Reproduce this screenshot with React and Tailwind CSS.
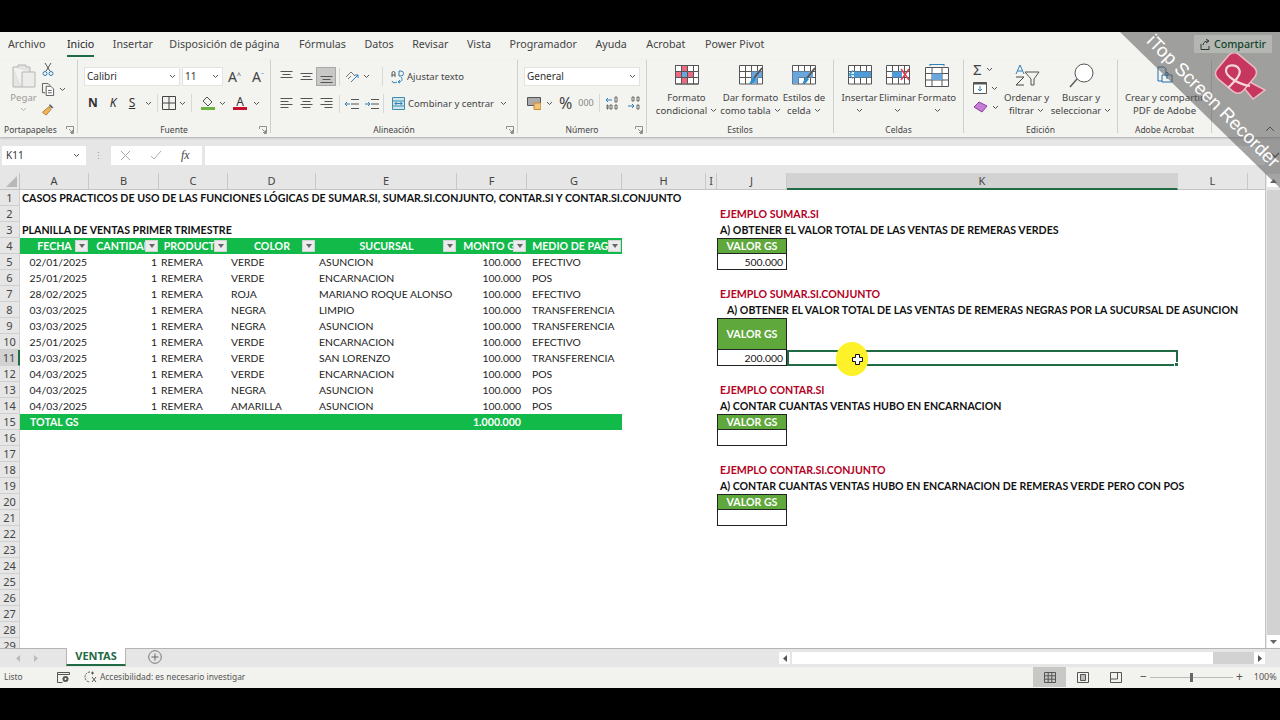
import React from "react";

const Ch = ({ className = "" }) => (
  <svg width="7" height="5" viewBox="0 0 7 5" className={"shrink-0 " + className}><path d="M1 1l2.5 2.5L6 1" fill="none" stroke="#555" strokeWidth="1" /></svg>
);
const Launcher = () => (
  <svg width="8" height="8" viewBox="0 0 8 8" className="absolute right-[3px] bottom-[-10px]"><path d="M.5 3V.5H7.500V7.500H5M3 3l3.500 3.500M6.500 4v2.500H4" fill="none" stroke="#777" strokeWidth=".8" /></svg>
);
const Group = ({ w, label, children }) => (
  <div className={"relative shrink-0 flex flex-col h-[73px] border-r border-[#cfcfcc] " + w}>
    <div className="h-[64px] shrink-0 relative">{children}</div>
    <div className="shrink-0 h-[12px] text-center text-[8.5px] leading-[12px] text-[#444] font-['Noto_Sans',sans-serif] truncate">{label}</div>
  </div>
);
const Lines = ({ kind }) => {
  const rows = {
    top: [[0, 12, 1], [2, 10, 4], [0, 12, 7]],
    mid: [[0, 12, 3], [2, 10, 6], [0, 12, 9]],
    bot: [[0, 12, 6], [2, 10, 9], [0, 12, 12]],
    left: [[0, 12, 1], [0, 8, 4], [0, 12, 7], [0, 8, 10]],
    center: [[0, 12, 1], [2, 10, 4], [0, 12, 7], [2, 10, 10]],
    right: [[0, 12, 1], [4, 12, 4], [0, 12, 7], [4, 12, 10]],
  }[kind];
  return (
    <svg width="13" height="13" viewBox="0 0 12 13">
      {rows.map((r, i) => <path key={i} d={`M${r[0]} ${r[2] + 0.5}H${r[1]}`} stroke="#555" strokeWidth="1" />)}
    </svg>
  );
};
const TableIcon = ({ children, w = 24, h = 20 }) => (
  <svg width={w} height={h} viewBox="0 0 24 20" className="block">{children}</svg>
);
const grid = "M.5 .5H23.500V19H.5ZM.5 6.500H23.500M.5 12.500H23.500M6.500 .5V19M12.500 .5V19M18.500 .5V19";

const BigBtn = ({ icon, l1, l2, chev1, chev2, className = "" }) => (
  <div className={"flex flex-col items-center text-[9.6px] leading-[13px] text-[#444] font-['Noto_Sans',sans-serif] " + className}>
    <div className="h-[20px] mt-[5px] flex items-center justify-center">{icon}</div>
    <div className="mt-[6px] whitespace-nowrap flex items-center gap-[3px] h-[13px]">{l1}{chev1 && <Ch />}</div>
    <div className="whitespace-nowrap flex items-center gap-[3px] h-[13px]">{l2}{chev2 && <Ch />}</div>
  </div>
);

const Ribbon = () => (
  <div className="flex h-[77px] bg-[#f3f3f0] shadow-[0_1px_2px_rgba(0,0,0,.25)] relative">
    <Group w="w-[78px]" label={<span className="block text-left pl-[4px]">Portapapeles</span>}>
      <Launcher />
      <div className="flex pl-[11px] pt-[3px]">
        <div className="flex flex-col items-center w-[25px]">
          <svg width="24" height="27" viewBox="0 0 24 27"><path d="M1 4h5V2h8v2h4v5M1 4v20h9" fill="#e4e4e2" stroke="#b5b5b3" /><path d="M10 9h13v15H10z" fill="#ececea" stroke="#b5b5b3" /></svg>
          <div className="text-[9.6px] leading-[13px] text-[#9a9a98] font-['Noto_Sans',sans-serif] mt-[1px]">Pegar</div>
          <Ch className="mt-[3px] opacity-40" />
        </div>
        <div className="flex flex-col ml-[5px] gap-[7px]">
          <svg width="14" height="13" viewBox="0 0 14 13"><path d="M4 0l5 8M10 0L5 8" stroke="#555" fill="none" /><circle cx="4" cy="10.500" r="2" fill="none" stroke="#2f7fb8" /><circle cx="10" cy="10.500" r="2" fill="none" stroke="#2f7fb8" /></svg>
          <div className="flex items-center gap-[3px]">
            <svg width="15" height="13" viewBox="0 0 15 14"><path d="M1 .5h6l2 2V3M1 .5v10h3" fill="none" stroke="#555" /><path d="M5 3.500h5l3 3v7H5zM7 8h4M7 10.500h4" fill="#fff" stroke="#555" /></svg>
            <Ch />
          </div>
          <svg width="15" height="13" viewBox="0 0 15 14"><path d="M9 1l4 4-2 1-3-3z" fill="#666" /><path d="M8 4l2 3-5 6-4-3z" fill="#f0b35a" stroke="#b8792a" /></svg>
        </div>
      </div>
    </Group>
    <Group w="w-[193px]" label="Fuente">
      <Launcher />
      <div className="flex items-center pl-[6px] pt-[7px] gap-[2px]">
        <div className="w-[96px] h-[19px] bg-white border border-[#e3e3e0] flex items-center justify-between pl-[2px] pr-[3px] text-[10px] text-[#333] font-['Noto_Sans',sans-serif]">Calibri<Ch /></div>
        <div className="w-[41px] h-[19px] bg-white border border-[#e3e3e0] flex items-center justify-between pl-[2px] pr-[3px] text-[10px] text-[#333] font-['Noto_Sans',sans-serif]">11<Ch /></div>
        <span className="ml-[3px] text-[14px] leading-none text-[#444] font-['Noto_Sans',sans-serif] w-[22px]">A<sup className="text-[7px]">^</sup></span>
        <span className="text-[14px] leading-none text-[#444] font-['Noto_Sans',sans-serif]">A<sup className="text-[7px] text-[#2f7fb8]">ˇ</sup></span>
      </div>
      <div className="flex items-center pl-[5px] mt-[8px] h-[18px] text-[#333]">
        <span className="w-[20px] text-[12px] font-bold font-['Noto_Sans',sans-serif] text-center">N</span>
        <span className="w-[20px] text-[12px] italic font-['Noto_Sans',sans-serif] text-center">K</span>
        <span className="w-[18px] text-[12px] underline font-['Noto_Sans',sans-serif] text-center">S</span>
        <Ch className="ml-[4px]" />
        <div className="w-px h-[18px] bg-[#d8d8d5] ml-[5px]" />
        <svg width="14" height="14" viewBox="0 0 14 14" className="ml-[4px]"><path d="M.5 .5h13v13H.5zM7 .5v13M.5 7h13" fill="none" stroke="#444" /></svg>
        <Ch className="ml-[3px]" />
        <div className="w-px h-[18px] bg-[#d8d8d5] ml-[5px]" />
        <div className="flex flex-col items-center ml-[9px] w-[14px]">
          <svg width="12" height="11" viewBox="0 0 12 11"><path d="M5 1l5 5-4 4-5-5z" fill="none" stroke="#555" /></svg>
          <div className="w-[14px] h-[3px] bg-[#6db33f]" />
        </div>
        <Ch className="ml-[4px]" />
        <div className="flex flex-col items-center ml-[7px] w-[14px]">
          <span className="text-[12px] leading-[11px] text-[#333] font-['Noto_Sans',sans-serif]">A</span>
          <div className="w-[14px] h-[3px] bg-[#c8102e]" />
        </div>
        <Ch className="ml-[6px]" />
      </div>
    </Group>
    <Group w="w-[247px]" label="Alineación">
      <Launcher />
      <div className="flex items-center pl-[9px] pt-[7px] h-[26px]">
        <div className="w-[20px]"><Lines kind="top" /></div>
        <div className="w-[16px]"><Lines kind="mid" /></div>
        <div className="w-[20px] h-[19px] bg-[#c8c8c6] border border-[#a8a8a6] flex items-center justify-center"><Lines kind="bot" /></div>
        <div className="w-px h-[18px] bg-[#d8d8d5] ml-[3px]" />
        <svg width="15" height="14" viewBox="0 0 15 14" className="ml-[5px]"><path d="M1 7l5-5 4 4M3 9l3-3" fill="none" stroke="#777" /><path d="M6 12L13 5M13 5h-3M13 5v3" fill="none" stroke="#2f7fb8" /></svg>
        <Ch className="ml-[3px]" />
        <div className="w-px h-[19px] bg-[#d8d8d5] ml-[12px]" />
        <svg width="13" height="14" viewBox="0 0 13 14" className="ml-[8px]"><path d="M1 7V3a1.500 1.500 0 013 0v4M1 5h3" fill="none" stroke="#555" /><path d="M8 1v5h2a1 1 0 000-5zM1 11c0 2 4 2 5 1M10 7c2 2 1 5-3 5l2-2M7 12l2 1" fill="none" stroke="#2f7fb8" /></svg>
        <span className="ml-[3px] mt-[1px] text-[9.5px] text-[#444] font-['Noto_Sans',sans-serif]">Ajustar texto</span>
      </div>
      <div className="flex items-center pl-[9px] mt-[8px] h-[19px]">
        <div className="w-[20px]"><Lines kind="left" /></div>
        <div className="w-[20px]"><Lines kind="center" /></div>
        <div className="w-[19px]"><Lines kind="right" /></div>
        <div className="w-px h-[18px] bg-[#d8d8d5]" />
        <svg width="14" height="12" viewBox="0 0 14 12" className="ml-[5px]"><path d="M6 1.500h8M6 6h8M6 10.500h8" stroke="#555" /><path d="M0 6h5M0 6l2-2M0 6l2 2" fill="none" stroke="#2f7fb8" /></svg>
        <svg width="14" height="12" viewBox="0 0 14 12" className="ml-[6px]"><path d="M6 1.500h8M6 6h8M6 10.500h8" stroke="#555" /><path d="M0 6h5M5 6L3 4M5 6L3 8" fill="none" stroke="#2f7fb8" /></svg>
        <div className="w-px h-[19px] bg-[#d8d8d5] ml-[4px]" />
        <svg width="13" height="13" viewBox="0 0 13 13" className="ml-[8px]"><path d="M.5 .5h12v12H.5zM.5 4h12M.5 9h12" fill="#cfe6ee" stroke="#3f8fa8" /><path d="M3 6.500h7M3 6.500l1.500-1.500M3 6.500L4.500 8M10 6.500L8.500 5M10 6.500L8.500 8" fill="none" stroke="#2f7fb8" /></svg>
        <span className="ml-[3px] mt-[1px] text-[9.5px] text-[#444] font-['Noto_Sans',sans-serif] whitespace-nowrap">Combinar y centrar</span>
        <Ch className="ml-[6px]" />
      </div>
    </Group>
    <Group w="w-[129px]" label="Número">
      <Launcher />
      <div className="pl-[6px] pt-[7px]">
        <div className="w-[116px] h-[19px] bg-white border border-[#e3e3e0] flex items-center justify-between pl-[2px] pr-[3px] text-[10px] text-[#333] font-['Noto_Sans',sans-serif]">General<Ch /></div>
      </div>
      <div className="flex items-center pl-[9px] mt-[8px] h-[18px] text-[#444] font-['Noto_Sans',sans-serif]">
        <svg width="14" height="13" viewBox="0 0 14 13"><path d="M.5 .5h13v8H.5z" fill="#aaa" stroke="#555" /><path d="M7 6h7v6.500H7z" fill="#f2c27a" stroke="#c88a2c" /></svg>
        <Ch className="ml-[5px]" />
        <span className="ml-[6px] text-[16px] leading-none">%</span>
        <span className="ml-[6px] text-[9px] text-[#888]">000</span>
        <div className="w-px h-[18px] bg-[#d8d8d5] ml-[5px]" />
        <svg width="14" height="14" viewBox="0 0 14 14" className="ml-[6px]"><path d="M0 4h6M0 4l2-2M0 4l2 2" fill="none" stroke="#2f7fb8" /><path d="M9 1h2v5H9zM1 9h1v4H1zM4 9h2v4H4zM9 9h2v4H9z" fill="none" stroke="#444" strokeWidth=".8" /></svg>
        <svg width="14" height="14" viewBox="0 0 14 14" className="ml-[8px]"><path d="M0 10h6M6 10L4 8M6 10l-2 2" fill="none" stroke="#2f7fb8" /><path d="M4 1h2v4H4zM9 1h2v4H9zM9 9h2v4H9z" fill="none" stroke="#444" strokeWidth=".8" /></svg>
      </div>
    </Group>
    <Group w="w-[187px]" label="Estilos">
      <div className="flex pl-[8px]">
        <BigBtn className="w-[63px]" l1="Formato" l2="condicional" chev2 icon={<TableIcon><path d={grid} fill="#fff" stroke="#555" /><path d="M6.500 .5h6v6h6v6h-6v6h-6v-6h-6v-6h6z" fill="#ef6a80" /><path d="M6.500 6.500h6v6h-6z" fill="#6aa6de" /><path d={grid} fill="none" stroke="#555" /></TableIcon>} />
        <BigBtn className="w-[65px] mr-[-6px]" l1="Dar formato" l2="como tabla" chev2 icon={<TableIcon><path d={grid} fill="#fff" stroke="#555" /><path d="M12.500 6.500H23v6H18.500v6H12.500z" fill="#6aa6de" /><path d="M23 3L15 13" stroke="#555" strokeWidth="2" /><path d="M14 12l3 2-3 4-4 1z" fill="#2f8fc8" /></TableIcon>} />
        <BigBtn className="w-[54px]" l1="Estilos de" l2="celda" chev2 icon={<TableIcon><path d={grid} fill="#fff" stroke="#555" /><path d="M.5 6.500H21v6H6.500v6H.5z" fill="#6aa6de" /><path d="M23 3L15 13" stroke="#555" strokeWidth="2" /><path d="M14 12l3 2-3 4-4 1z" fill="#2f8fc8" /></TableIcon>} />
      </div>
    </Group>
    <Group w="w-[130px]" label="Celdas">
      <div className="flex pl-[7px]">
        <BigBtn className="w-[37px]" l1="Insertar" l2={<Ch />} icon={<TableIcon><path d={grid} fill="#fff" stroke="#555" /><path d="M6 6.500H23v6H6z" fill="#4f9cd8" /><path d="M1 9.500h9M1 9.500l4-4M1 9.500l4 4" fill="none" stroke="#3f9fd0" strokeWidth="1.500" /></TableIcon>} />
        <BigBtn className="w-[39px]" l1="Eliminar" l2={<Ch />} icon={<TableIcon><path d={grid} fill="#fff" stroke="#555" /><path d="M6 6.500H16v6H6z" fill="#4f9cd8" /><path d="M15 4l8 11M23 4l-8 11" stroke="#d8405a" strokeWidth="1.500" /></TableIcon>} />
        <BigBtn className="w-[40px]" l1="Formato" l2={<Ch />} icon={<svg width="24" height="23" viewBox="0 0 24 23"><path d="M5 .5h14M5 0v2M19 0v2" stroke="#2f7fb8" /><path d="M.5 3.500h23v19H.5zM.5 9.500h23M.5 16h23M7 3.500v19M17 3.500v19" fill="#fff" stroke="#555" /><path d="M7 9.500h10V16H7z" fill="#6aa6de" /></svg>} />
      </div>
    </Group>
    <Group w="w-[154px]" label="Edición">
      <div className="flex">
        <div className="flex flex-col pl-[9px] pt-[2px] gap-[5px] w-[40px]">
          <div className="flex items-center gap-[4px] h-[14px]"><span className="text-[15px] leading-none text-[#444] font-['Noto_Sans',sans-serif]">Σ</span><Ch /></div>
          <div className="flex items-center gap-[4px] h-[14px]"><svg width="14" height="12" viewBox="0 0 14 12"><path d="M.5 .5h13v11H.5z" fill="#fff" stroke="#555" /><path d="M.5 .5h13v2H.5z" fill="#555" /><path d="M7 4v5M5 7l2 2 2-2" fill="none" stroke="#2f7fb8" /></svg><Ch /></div>
          <div className="flex items-center gap-[4px] h-[14px]"><svg width="15" height="12" viewBox="0 0 15 12"><path d="M1 6l5-5 8 4-5 6z" fill="#c77dd8" stroke="#8a3fa0" /></svg><Ch /></div>
        </div>
        <BigBtn className="w-[45px]" l1="Ordenar y" l2="filtrar" chev2 icon={<svg width="26" height="23" viewBox="0 0 26 23"><path d="M2 10L6 1l4 9M3.500 7h5" fill="none" stroke="#2f7fb8" /><path d="M2 13h8L2 21h8" fill="none" stroke="#444" /><path d="M11 8h14l-5 7v6h-3v-6z" fill="none" stroke="#555" /></svg>} />
        <BigBtn className="w-[64px]" l1="Buscar y" l2="seleccionar" chev2 icon={<svg width="25" height="25" viewBox="0 0 25 25"><circle cx="15" cy="10" r="9" fill="#fff" stroke="#555" /><path d="M8 16L1 24" stroke="#555" strokeWidth="1.300" /></svg>} />
      </div>
    </Group>
    <Group w="w-[94px]" label="Adobe Acrobat">
      <BigBtn l1="Crear y compartir" l2="PDF de Adobe" icon={<svg width="16" height="18" viewBox="0 0 16 18"><path d="M1 1h6l2 2v4M1 1v14h4" fill="none" stroke="#1f6fae" /><path d="M5 9h10v7H5zM10 13V6M8 8l2-2 2 2" fill="none" stroke="#1f6fae" /></svg>} />
    </Group>
    <div className="flex-1 relative">
      <svg width="10" height="6" viewBox="0 0 10 6" className="absolute right-[5px] bottom-[5px]"><path d="M1 5l4-4 4 4" fill="none" stroke="#444" /></svg>
    </div>
  </div>
);

const FormulaBar = () => (
  <div className="h-[36px] bg-[#e6e6e6] flex items-center pl-[2px] font-['Noto_Sans',sans-serif]">
    <div className="w-[84px] h-[19px] bg-white flex items-center justify-between pl-[4px] pr-[6px] text-[10px] text-[#333]">K11<Ch /></div>
    <div className="w-[25px] text-center text-[#999] text-[9px] leading-none">⋮</div>
    <div className="w-[91px] h-[19px] bg-white flex items-center pl-[9px] gap-[19px]">
      <svg width="11" height="11" viewBox="0 0 11 11"><path d="M1 1l9 9M10 1l-9 9" stroke="#aaa" /></svg>
      <svg width="12" height="10" viewBox="0 0 12 10"><path d="M1 6l3 3 7-8" fill="none" stroke="#aaa" /></svg>
      <span className="text-[12px] italic text-[#444] font-['Liberation_Serif',serif] leading-none">fx</span>
    </div>
    <div className="ml-[3px] w-[1060px] h-[19px] bg-white" />
    <svg width="10" height="6" viewBox="0 0 10 6" className="ml-[5px]"><path d="M1 1l4 4 4-4" fill="none" stroke="#444" strokeWidth="1.300" /></svg>
  </div>
);

const gridCols = "grid-cols-[20px_69px_70px_69px_88px_141px_70px_95px_84px_11px_70px_391px_70px_17px]";
const colNames = ["A", "B", "C", "D", "E", "F", "G", "H", "I", "J", "K", "L"];

const sales = [
  ["02/01/2025", "VERDE", "ASUNCION", "EFECTIVO"],
  ["25/01/2025", "VERDE", "ENCARNACION", "POS"],
  ["28/02/2025", "ROJA", "MARIANO ROQUE ALONSO", "EFECTIVO"],
  ["03/03/2025", "NEGRA", "LIMPIO", "TRANSFERENCIA"],
  ["03/03/2025", "NEGRA", "ASUNCION", "TRANSFERENCIA"],
  ["25/01/2025", "VERDE", "ENCARNACION", "EFECTIVO"],
  ["03/03/2025", "VERDE", "SAN LORENZO", "TRANSFERENCIA"],
  ["04/03/2025", "VERDE", "ENCARNACION", "POS"],
  ["04/03/2025", "NEGRA", "ASUNCION", "POS"],
  ["04/03/2025", "AMARILLA", "ASUNCION", "POS"],
];

const C = ({ className = "", children }) => (
  <div className={"whitespace-nowrap leading-[16px] h-full " + className}>{children}</div>
);
const Filter = () => (
  <div className="absolute right-[1px] top-[2px] w-[13px] h-[12px] bg-[#ececec] border border-[#d4d4d4] flex items-center justify-center">
    <svg width="6" height="4" viewBox="0 0 6 4"><path d="M0 0h6L3 4z" fill="#666" /></svg>
  </div>
);
const H = ({ children }) => (
  <div className="relative bg-[#12ba49] text-white font-bold text-center overflow-hidden whitespace-nowrap leading-[16px]">
    {children}<Filter />
  </div>
);
const Empty = () => <div />;
const Red = ({ children, className = "" }) => <C className={"font-bold text-[#b4001e] pl-[3px] " + className}>{children}</C>;
const Bk = ({ children, className = "" }) => <C className={"font-bold text-[#111] pl-[3px] " + className}>{children}</C>;
const VH = ({ className = "" }) => <div className={"bg-[#5fa83c] text-white font-bold text-center border border-[#222] pt-[1px] flex items-center justify-center " + className}>VALOR GS</div>;
const VB = ({ children }) => <div className="bg-white border border-[#222] border-t-0 text-right pr-[3px] leading-[16px] text-[10.4px] text-[#111]">{children}</div>;

const blanks = (n) => Array.from({ length: n }, (_, i) => <Empty key={"b" + i} />);

const rightPart = {
  2: <><Red>EJEMPLO SUMAR.SI</Red>{blanks(2)}</>,
  3: <><Bk>A) OBTENER EL VALOR TOTAL DE LAS VENTAS DE REMERAS VERDES</Bk>{blanks(2)}</>,
  4: <><VH />{blanks(2)}</>,
  5: <><VB>500.000</VB>{blanks(2)}</>,
  7: <><Red>EJEMPLO SUMAR.SI.CONJUNTO</Red>{blanks(2)}</>,
  8: <><Bk className="pl-[10px]">A) OBTENER EL VALOR TOTAL DE LAS VENTAS DE REMERAS NEGRAS POR LA SUCURSAL DE ASUNCION</Bk>{blanks(2)}</>,
  9: <><VH className="row-span-2" />{blanks(2)}</>,
  10: <>{blanks(2)}</>,
  11: <><VB>200.000</VB><div className="border-2 border-[#1f6b45] relative"><div className="absolute -right-[3px] -bottom-[3px] w-[5px] h-[5px] bg-[#1f6b45] border border-white" /></div><Empty /></>,
  13: <><Red>EJEMPLO CONTAR.SI</Red>{blanks(2)}</>,
  14: <><Bk>A) CONTAR CUANTAS VENTAS HUBO EN ENCARNACION</Bk>{blanks(2)}</>,
  15: <><VH />{blanks(2)}</>,
  16: <><VB />{blanks(2)}</>,
  18: <><Red>EJEMPLO CONTAR.SI.CONJUNTO</Red>{blanks(2)}</>,
  19: <><Bk className="text-[10.55px]">A) CONTAR CUANTAS VENTAS HUBO EN ENCARNACION DE REMERAS VERDE PERO CON POS</Bk>{blanks(2)}</>,
  20: <><VH />{blanks(2)}</>,
  21: <><VB />{blanks(2)}</>,
};

const Body = "text-[10.4px] text-[#222] ";
const leftPart = (r) => {
  if (r === 1) return <><C className="font-bold text-[#111] pl-[2px] text-[10.65px]">CASOS PRACTICOS DE USO DE LAS FUNCIONES LÓGICAS DE SUMAR.SI, SUMAR.SI.CONJUNTO, CONTAR.SI Y CONTAR.SI.CONJUNTO</C>{blanks(7)}</>;
  if (r === 3) return <><C className="font-bold text-[#111] pl-[2px]">PLANILLA DE VENTAS PRIMER TRIMESTRE</C>{blanks(7)}</>;
  if (r === 4) return <><H>FECHA</H><H>CANTIDAD</H><H>PRODUCTO</H><H>COLOR</H><H>SUCURSAL</H><H>MONTO GS</H><H>MEDIO DE PAGO</H><Empty /></>;
  if (r >= 5 && r <= 14) {
    const s = sales[r - 5];
    return <>
      <C className={Body + "text-right pr-[2px]"}>{s[0]}</C>
      <C className={Body + "text-right pr-[2px]"}>1</C>
      <C className={Body + "pl-[2px]"}>REMERA</C>
      <C className={Body + "pl-[3px]"}>{s[1]}</C>
      <C className={Body + "pl-[3px]"}>{s[2]}</C>
      <C className={Body + "text-right pr-[6px]"}>100.000</C>
      <C className={Body + "pl-[5px]"}>{s[3]}</C>
      <Empty />
    </>;
  }
  if (r === 15) return <>
    <C className="bg-[#12ba49] text-white font-bold pl-[10px]">TOTAL GS</C>
    <div className="bg-[#12ba49]" /><div className="bg-[#12ba49]" /><div className="bg-[#12ba49]" /><div className="bg-[#12ba49]" />
    <C className="bg-[#12ba49] text-white font-bold text-right pr-[6px]">1.000.000</C>
    <div className="bg-[#12ba49]" /><Empty />
  </>;
  return blanks(8);
};

const Sheet = () => (
  <div className={"grid flex-1 overflow-hidden bg-white text-[10.6px] font-['Lato',sans-serif] auto-rows-[16px] grid-rows-[17px] " + gridCols}>
    <div className="bg-[#e6e6e6] border-r border-b border-[#c4c4c4] relative">
      <div className="absolute right-[2px] bottom-[2px] w-0 h-0 border-l-[11px] border-l-transparent border-b-[11px] border-b-[#b8b8b8]" />
    </div>
    {colNames.map((n) => (
      <div key={n} className={"text-center text-[11px] leading-[16px] text-[#444] border-r font-['Noto_Sans',sans-serif] " + (n === "K" ? "bg-[#d2d2d2] border-[#d2d2d2] border-b-2 border-b-[#1f6b45]" : "bg-[#e6e6e6] border-[#c8c8c8] border-b border-b-[#c4c4c4]")}>{n}</div>
    ))}
    <div className="bg-[#e6e6e6] border-b border-[#c4c4c4]" />
    {Array.from({ length: 29 }, (_, i) => i + 1).map((r) => (
      <React.Fragment key={r}>
        <div className={"text-center text-[11px] leading-[16px] text-[#444] border-r border-b font-['Noto_Sans',sans-serif] " + (r === 11 ? "bg-[#d2d2d2] border-r-2 border-r-[#1f6b45] border-b-[#d2d2d2]" : "bg-[#e6e6e6] border-[#cfcfcf]")}>{r}</div>
        {leftPart(r)}
        <Empty />
        {rightPart[r] || blanks(3)}
        <div className="bg-white" />
      </React.Fragment>
    ))}
  </div>
);

const VScroll = () => (
  <div className="w-[15px] bg-[#e6e6e6] flex flex-col pt-[1px] pl-[1px] border-l border-[#c4c4c4]">
    <div className="h-[13px] bg-white flex items-center justify-center"><svg width="7" height="4" viewBox="0 0 7 4"><path d="M3.500 0L7 4H0z" fill="#666" /></svg></div>
    <div className="h-[3px]" />
    <div className="flex-1 bg-[#d2d2d2]" />
    <div className="h-[13px] bg-white flex items-center justify-center"><svg width="7" height="4" viewBox="0 0 7 4"><path d="M3.500 4L7 0H0z" fill="#666" /></svg></div>
  </div>
);

const TabBar = () => (
  <div className="h-[19px] bg-[#e6e6e6] border-t border-[#b4b4b4] flex font-['Noto_Sans',sans-serif]">
    <div className="w-[66px] flex items-center pl-[16px] gap-[14px]">
      <svg width="4" height="7" viewBox="0 0 4 7"><path d="M4 0L0 3.500 4 7z" fill="#bbb" /></svg>
      <svg width="4" height="7" viewBox="0 0 4 7"><path d="M0 0l4 3.500L0 7z" fill="#bbb" /></svg>
    </div>
    <div className="w-[60px] -mt-px h-[18px] bg-white border-l border-r border-b-2 border-b-[#1f6b45] border-[#b4b4b4] text-center text-[11px] font-bold leading-[15px] text-[#1f6b45]">VENTAS</div>
    <svg width="14" height="14" viewBox="0 0 14 14" className="ml-[22px] mt-[1px]"><circle cx="7" cy="7" r="6.300" fill="none" stroke="#777" /><path d="M3.500 7h7M7 3.500v7" stroke="#666" /></svg>
    <div className="ml-[617px] mt-[3px] flex h-[12px]">
      <div className="w-[11px] bg-white flex items-center justify-center"><svg width="4" height="7" viewBox="0 0 4 7"><path d="M4 0L0 3.500 4 7z" fill="#555" /></svg></div>
      <div className="w-[2px]" />
      <div className="w-[421px] bg-white" />
      <div className="w-[41px] bg-[#d2d2d2]" />
      <div className="w-[11px] bg-white flex items-center justify-center"><svg width="4" height="7" viewBox="0 0 4 7"><path d="M0 0l4 3.500L0 7z" fill="#555" /></svg></div>
    </div>
  </div>
);

const StatusBar = () => (
  <div className="h-[21px] pb-[1px] bg-[#f2f2ee] flex items-center text-[8.4px] text-[#555] font-['Noto_Sans',sans-serif] pl-[4px]">
    <span className="w-[53px]">Listo</span>
    <svg width="13" height="11" viewBox="0 0 13 11" className="mr-[14px]"><path d="M.5 .5h12v2H.5zM.5 2.500v8h5" fill="none" stroke="#555" /><circle cx="8.500" cy="7" r="3" fill="#555" /><circle cx="8.500" cy="7" r="1" fill="#fff" /></svg>
    <svg width="13" height="12" viewBox="0 0 13 12" className="mr-[2px]"><path d="M6 1a5 5 0 100 10" fill="none" stroke="#555" strokeDasharray="2 1" /><path d="M8 6l4 5M12 6l-4 5M7 2h3M8.500 .5v3" stroke="#555" /></svg>
    <span className="ml-[1px] w-[146px] whitespace-nowrap">Accesibilidad: es necesario investigar</span>
    <div className="flex items-center ml-[787px] h-full">
      <div className="w-[33px] h-full bg-[#c8c8c6] flex items-center justify-center"><svg width="12" height="11" viewBox="0 0 12 11"><path d="M.5 .5h11v10H.5zM.5 3.800h11M.5 7.200h11M4.200 .5v10M7.800 .5v10" fill="none" stroke="#555" /></svg></div>
      <div className="w-[33px] flex justify-center"><svg width="12" height="11" viewBox="0 0 12 11"><path d="M.5 .5h11v10H.5z" fill="none" stroke="#555" /><path d="M3.500 2.500h5v6h-5z" fill="#bbb" stroke="#555" /></svg></div>
      <div className="w-[33px] flex justify-center"><svg width="12" height="11" viewBox="0 0 12 11"><path d="M.5 .5h11v10H.5zM.5 7h7V.5" fill="none" stroke="#555" /></svg></div>
      <span className="ml-[8px] text-[12px] leading-none">−</span>
      <div className="relative w-[83px] h-px bg-[#bbb] ml-[3px]"><div className="absolute left-[40px] -top-[4px] w-[3px] h-[9px] bg-[#666]" /></div>
      <span className="ml-[3px] text-[12px] leading-none">+</span>
      <span className="ml-[11px] text-[9px] whitespace-nowrap">100%</span>
    </div>
  </div>
);

const tabs = [
  ["Archivo", "mr-[3px]"], ["Inicio", "text-[#222]"], ["Insertar", "mr-[-2px]"], ["Disposición de página", "mr-[1px]"],
  ["Fórmulas", ""], ["Datos", ""], ["Revisar", ""], ["Vista", ""], ["Programador", ""], ["Ayuda", "mr-[1px]"], ["Acrobat", "mr-[1px]"], ["Power Pivot", ""],
];

export default function App() {
  return (
    <div className="relative w-[1280px] h-[720px] bg-black overflow-hidden">
      <div className="h-[32px]" />
      <div className="h-[656px] flex flex-col bg-[#f3f3f0]">
        <div className="h-[28px] pb-[4px] flex items-center pl-[8px] gap-[18.5px] text-[10.7px] text-[#444] font-['Noto_Sans',sans-serif] bg-[#f3f3f0] relative">
          {tabs.map(([t, c]) => (
            <div key={t} className={"relative whitespace-nowrap " + c}>
              {t}
              {t === "Inicio" && <div className="absolute left-0 right-0 -bottom-[5px] h-[2px] bg-[#1f6b45]" />}
            </div>
          ))}
          <div className="relative z-10 ml-auto mr-[8px] w-[78px] h-[18px] bg-[#b4b6b2] flex items-center justify-center gap-[3px] text-[#12452c] font-medium">
            <svg width="11" height="11" viewBox="0 0 11 11"><path d="M1 5v5.500h8V7M3 6c0-3 3-4 5-4M6 0l3 2-3 2" fill="none" stroke="#2a3a30" /></svg>
            Compartir
          </div>
        </div>
        <Ribbon />
        <FormulaBar />
        <div className="flex flex-1 min-h-0">
          <Sheet />
          <VScroll />
        </div>
        <TabBar />
        <StatusBar />
      </div>

      {/* cursor highlight over the sheet */}
      <div className="absolute left-[836px] top-[342px] w-[32px] h-[34px] rounded-full bg-[#fdf22a] pointer-events-none flex items-center justify-center">
        <svg width="11" height="11" viewBox="0 0 11 11" className="ml-[10px]"><path d="M3.500 .5h4v3h3v4h-3v3h-4v-3h-3v-4h3z" fill="#fff" stroke="#111" /></svg>
      </div>

      {/* recorder watermark */}
      <svg width="160" height="156" viewBox="0 0 160 156" className="absolute left-[1120px] top-[32px] pointer-events-none">
        <path d="M0 0H160V156Z" fill="#5a5a5a" fillOpacity=".55" />
        <path d="M126 48L145 58 133 67 124 56Z" fill="#c7365f" stroke="#eabcc4" strokeWidth="1.500" />
        <rect x="99" y="25" width="34" height="32" rx="7" transform="rotate(40 116 41)" fill="#c7365f" stroke="#eabcc4" strokeWidth="1.500" />
        <path d="M108 56C116 48 122 42 119 37C116 32 107 32 106 38C105 44 118 52 130 54" fill="none" stroke="#f3d5da" strokeWidth="2.200" />
      </svg>
      <div className="absolute left-[1113px] top-[92px] w-[200px] text-center rotate-[45deg] text-white text-[18.5px] leading-none font-['Liberation_Sans',sans-serif] whitespace-nowrap pointer-events-none">iTop Screen Recorder</div>
    </div>
  );
}
